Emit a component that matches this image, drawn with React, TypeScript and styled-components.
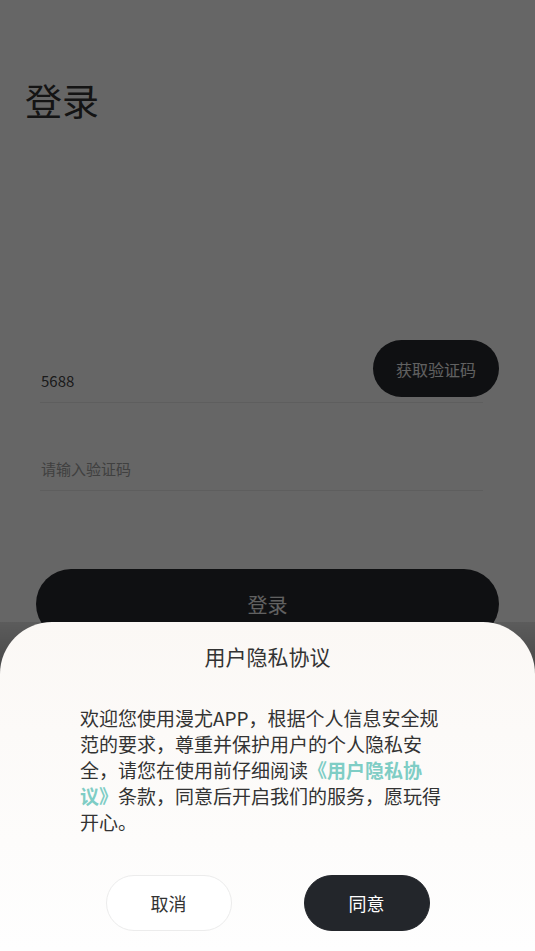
import React from "react";
import styled, { createGlobalStyle } from "styled-components";

const Global = createGlobalStyle`
  html, body { margin: 0; padding: 0; background: #ffffff; }
  body { font-family: "Noto Sans CJK SC", "Noto Sans", sans-serif; }
  * { box-sizing: border-box; }
`;

const Screen = styled.div`
  position: relative;
  width: 535px;
  height: 951px;
  overflow: hidden;
  background: #ffffff;
`;

const Page = styled.div`
  display: flex;
  flex-direction: column;
  padding: 75px 0 0;
`;

const Title = styled.h1`
  margin: 0 0 0 25px;
  font-size: 37px;
  line-height: 50px;
  font-weight: 400;
  color: #333333;
`;

const Form = styled.div`
  display: flex;
  flex-direction: column;
  gap: 43px;
  margin: 233px 52px 0 40px;
`;

const Field = styled.div<{ $placeholder?: boolean }>`
  position: relative;
  height: 45px;
  display: flex;
  align-items: center;
  padding: 0 1px;
  border-bottom: 1px solid #ebebeb;
  font-size: 15px;
  color: ${(p) => (p.$placeholder ? "#a0a0a0" : "#444444")};
`;

const CodeButton = styled.button`
  position: absolute;
  right: -16px;
  bottom: 5px;
  width: 126px;
  height: 57px;
  border: none;
  border-radius: 29px;
  background: #26282d;
  color: #f2f2f2;
  font-family: inherit;
  font-size: 16px;
`;

const LoginButton = styled.button`
  margin: 78px 36px 0;
  height: 70px;
  border: none;
  border-radius: 35px;
  background: #26282d;
  color: #f2f2f2;
  font-family: inherit;
  font-size: 20px;
`;

const Overlay = styled.div`
  position: absolute;
  inset: 0;
  background: rgba(0, 0, 0, 0.6);
`;

const SheetWrap = styled.div`
  position: absolute;
  left: 0;
  right: 0;
  bottom: 0;
  height: 329px;
  background: linear-gradient(rgba(0, 0, 0, 0.1), rgba(0, 0, 0, 0.35) 60px, rgba(0, 0, 0, 0.35));
`;

const Sheet = styled.div`
  height: 100%;
  display: flex;
  flex-direction: column;
  align-items: center;
  padding: 20px 0 20px;
  border-radius: 52px 52px 0 0;
  background: linear-gradient(#fbf8f5, #fefefe);
`;

const SheetTitle = styled.h2`
  margin: 0;
  font-size: 21px;
  line-height: 28px;
  font-weight: 400;
  color: #333333;
`;

const Body = styled.p`
  margin: 35px 0 0;
  width: 375px;
  font-size: 19px;
  line-height: 26px;
  color: #333333;
  text-spacing-trim: space-all;
`;

const Link = styled.span`
  color: #7fcdc5;
  font-weight: 700;
`;

const Actions = styled.div`
  display: flex;
  justify-content: center;
  gap: 72px;
  margin-top: auto;
`;

const ActionButton = styled.button<{ $primary?: boolean }>`
  width: 126px;
  height: 56px;
  border-radius: 28px;
  border: 1px solid ${(p) => (p.$primary ? "#23262b" : "#ececec")};
  background: ${(p) => (p.$primary ? "#23262b" : "#ffffff")};
  color: ${(p) => (p.$primary ? "#ffffff" : "#333333")};
  font-family: inherit;
  font-size: 18px;
`;

export default function App() {
  return (
    <Screen>
      <Global />
      <Page>
        <Title>登录</Title>
        <Form>
          <Field>
            5688
            <CodeButton>获取验证码</CodeButton>
          </Field>
          <Field $placeholder>请输入验证码</Field>
        </Form>
        <LoginButton>登录</LoginButton>
      </Page>
      <Overlay />
      <SheetWrap>
        <Sheet>
          <SheetTitle>用户隐私协议</SheetTitle>
          <Body>
            欢迎您使用漫尤APP，根据个人信息安全规范的要求，尊重并保护用户的个人隐私安全，请您在使用前仔细阅读<Link>《用户隐私协议》</Link>条款，同意后开启我们的服务，愿玩得开心。
          </Body>
          <Actions>
            <ActionButton>取消</ActionButton>
            <ActionButton $primary>同意</ActionButton>
          </Actions>
        </Sheet>
      </SheetWrap>
    </Screen>
  );
}
